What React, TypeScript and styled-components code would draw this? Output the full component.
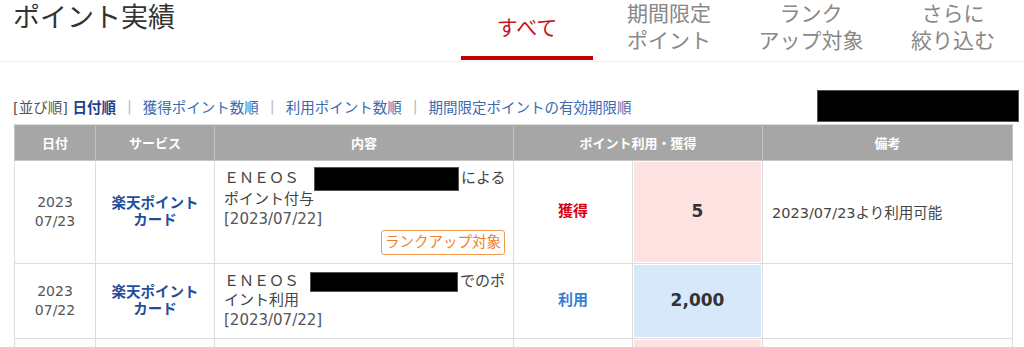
import * as React from 'react';
import styled, { createGlobalStyle } from 'styled-components';

const GlobalStyle = createGlobalStyle`
  html, body {
    margin: 0;
    padding: 0;
    overflow: hidden;
    background: #fff;
    font-family: "DejaVu Sans", "Noto Sans CJK JP", sans-serif;
    color: #333;
  }
`;

const Page = styled.div`
  width: 1024px;
`;

const TopBar = styled.div`
  display: flex;
  justify-content: space-between;
  height: 61px;
  border-bottom: 1px solid #eee;
`;

const Title = styled.h1`
  margin: 0;
  padding: 2px 0 0 13px;
  font-size: 27px;
  font-weight: normal;
  line-height: 32px;
  color: #333;
`;

const Tabs = styled.div`
  display: flex;
`;

const Tab = styled.div<{ $active?: boolean }>`
  width: 132px;
  margin: 0 5px;
  height: 56px;
  display: flex;
  align-items: center;
  justify-content: center;
  text-align: center;
  font-size: 21px;
  line-height: 27px;
  color: ${(p) => (p.$active ? '#c4161c' : '#888')};
  border-bottom: 4px solid ${(p) => (p.$active ? '#c00000' : 'transparent')};
`;

const SortBar = styled.div`
  display: flex;
  align-items: center;
  justify-content: space-between;
  margin-top: 28px;
  height: 32px;
  padding: 0 5px 0 13px;
`;

const SortList = styled.div`
  font-size: 14.5px;
  color: #555;
  display: flex;
  align-items: center;
  white-space: nowrap;
`;

const SortLink = styled.span<{ $current?: boolean }>`
  color: ${(p) => (p.$current ? '#1d3f8e' : '#3c6ab0')};
  font-weight: ${(p) => (p.$current ? 'bold' : 'normal')};
`;

const Sep = styled.span`
  color: #bbb;
  margin: 0 11px;
`;

const Masked = styled.div<{ $w: number; $h: number; $shift?: number }>`
  display: inline-block;
  width: ${(p) => p.$w}px;
  height: ${(p) => p.$h}px;
  background: #000;
  border: 1px solid #555;
  box-sizing: border-box;
`;

const Table = styled.table`
  margin: 2px 0 0 14px;
  width: 998px;
  table-layout: fixed;
  border-collapse: collapse;
  border-top: 1px solid #ddd;
`;

const Th = styled.th`
  background: #a6a6a6;
  color: #fff;
  font-family: "Noto Sans CJK JP", sans-serif;
  font-size: 13px;
  font-weight: bold;
  height: 35px;
  padding: 0;
  border: 1px solid #c4c4c4;
  border-top: none;
`;

const Td = styled.td<{ $tone?: 'gain' | 'use' }>`
  border: 1px solid #ddd;
  padding: 0;
  text-align: center;
  vertical-align: middle;
  font-size: 15px;
  line-height: 19px;
  background: ${(p) => (p.$tone === 'gain' ? '#fde2e2' : p.$tone === 'use' ? '#d7e8fb' : '#fff')};
  box-shadow: ${(p) => (p.$tone ? 'inset 0 0 0 1px #fff' : 'none')};
`;

const DateText = styled.div`
  color: #555;
  font-size: 14px;
  line-height: 19px;
`;

const Service = styled.div`
  color: #1f4f9c;
  font-weight: bold;
  font-size: 14.5px;
  line-height: 17px;
`;

const ContentCell = styled.td`
  border: 1px solid #ddd;
  padding: 6px 8px 8px 9px;
  text-align: left;
  vertical-align: top;
  font-size: 15px;
  line-height: 19px;
  color: #444;
`;

const Desc = styled.div`
  white-space: nowrap;
  font-family: "Noto Sans CJK JP", sans-serif;

  & > ${Masked} {
    vertical-align: middle;
    margin-top: -3px;
    margin-bottom: -3px;
    margin-right: 2px;
  }
`;

const UseDate = styled.div`
  margin-top: 3px;
  color: #555;
`;

const BadgeRow = styled.div`
  display: flex;
  justify-content: flex-end;
  margin-top: 1px;
`;

const Badge = styled.span`
  border: 1px solid #f39a4e;
  border-radius: 3px;
  color: #f07f2a;
  font-size: 14.5px;
  line-height: 21px;
  padding: 1px 3px;
`;

const Kind = styled.span<{ $tone: 'gain' | 'use' }>`
  font-weight: bold;
  font-size: 15px;
  color: ${(p) => (p.$tone === 'gain' ? '#d7000f' : '#3a7fd2')};
`;

const Amount = styled.span`
  font-weight: bold;
  font-size: 17px;
  color: #333;
`;

const NoteCell = styled.td`
  border: 1px solid #ddd;
  padding: 0 9px;
  text-align: left;
  vertical-align: middle;
  font-size: 14.5px;
  color: #444;
`;

interface Row {
  year: string;
  day: string;
  lead: string;
  mask?: { w: number; h: number; shift: number };
  text: string;
  line2: string;
  useDate: string;
  badge?: boolean;
  tone: 'gain' | 'use';
  amount: string;
  note: string;
}

const rows: Row[] = [
  { year: '2023', day: '07/23', lead: 'ＥＮＥＯＳ　', mask: { w: 145, h: 24, shift: 0 }, text: 'による', line2: 'ポイント付与', useDate: '[2023/07/22]', badge: true, tone: 'gain', amount: '5', note: '2023/07/23より利用可能' },
  { year: '2023', day: '07/22', lead: 'ＥＮＥＯＳ　', mask: { w: 148, h: 20, shift: -4 }, text: 'でのポ', line2: 'イント利用', useDate: '[2023/07/22]', tone: 'use', amount: '2,000', note: '' },
  { year: '2023', day: '07/21', lead: '', text: '', line2: '', useDate: '', tone: 'gain', amount: '10', note: '' },
];

const App: React.FC = (): React.ReactElement => {
  return (
    <Page>
      <GlobalStyle />
      <TopBar>
        <Title>ポイント実績</Title>
        <Tabs>
          <Tab $active>すべて</Tab>
          <Tab>期間限定<br />ポイント</Tab>
          <Tab>ランク<br />アップ対象</Tab>
          <Tab>さらに<br />絞り込む</Tab>
        </Tabs>
      </TopBar>
      <SortBar>
        <SortList>
          [並び順]&nbsp;<SortLink $current>日付順</SortLink>
          <Sep>|</Sep>
          <SortLink>獲得ポイント数順</SortLink>
          <Sep>|</Sep>
          <SortLink>利用ポイント数順</SortLink>
          <Sep>|</Sep>
          <SortLink>期間限定ポイントの有効期限順</SortLink>
        </SortList>
        <Masked $w={202} $h={32} />
      </SortBar>
      <Table>
        <colgroup>
          <col style={{ width: 81 }} />
          <col style={{ width: 119 }} />
          <col style={{ width: 299 }} />
          <col style={{ width: 119 }} />
          <col style={{ width: 130 }} />
          <col style={{ width: 250 }} />
        </colgroup>
        <thead>
          <tr>
            <Th>日付</Th>
            <Th>サービス</Th>
            <Th>内容</Th>
            <Th colSpan={2}>ポイント利用・獲得</Th>
            <Th>備考</Th>
          </tr>
        </thead>
        <tbody>
          {rows.map((row, index) => (
            <tr key={`row_${index}`} style={index === 2 ? { height: 80 } : undefined}>
              <Td>
                {index < 2 && <DateText>{row.year}<br />{row.day}</DateText>}
              </Td>
              <Td>
                {index < 2 && <Service>楽天ポイント<br />カード</Service>}
              </Td>
              <ContentCell>
                {row.mask && (
                  <Desc>
                    {row.lead}
                    <Masked $w={row.mask.w} $h={row.mask.h} style={{ marginLeft: row.mask.shift }} />
                    {row.text}<br />{row.line2}
                  </Desc>
                )}
                {row.useDate && <UseDate>{row.useDate}</UseDate>}
                {row.badge && (
                  <BadgeRow>
                    <Badge>ランクアップ対象</Badge>
                  </BadgeRow>
                )}
              </ContentCell>
              <Td>
                {index < 2 && <Kind $tone={row.tone}>{row.tone === 'gain' ? '獲得' : '利用'}</Kind>}
              </Td>
              <Td $tone={row.tone}>
                {index < 2 && <Amount>{row.amount}</Amount>}
              </Td>
              <NoteCell>{row.note}</NoteCell>
            </tr>
          ))}
        </tbody>
      </Table>
    </Page>
  );
};

export default App;
